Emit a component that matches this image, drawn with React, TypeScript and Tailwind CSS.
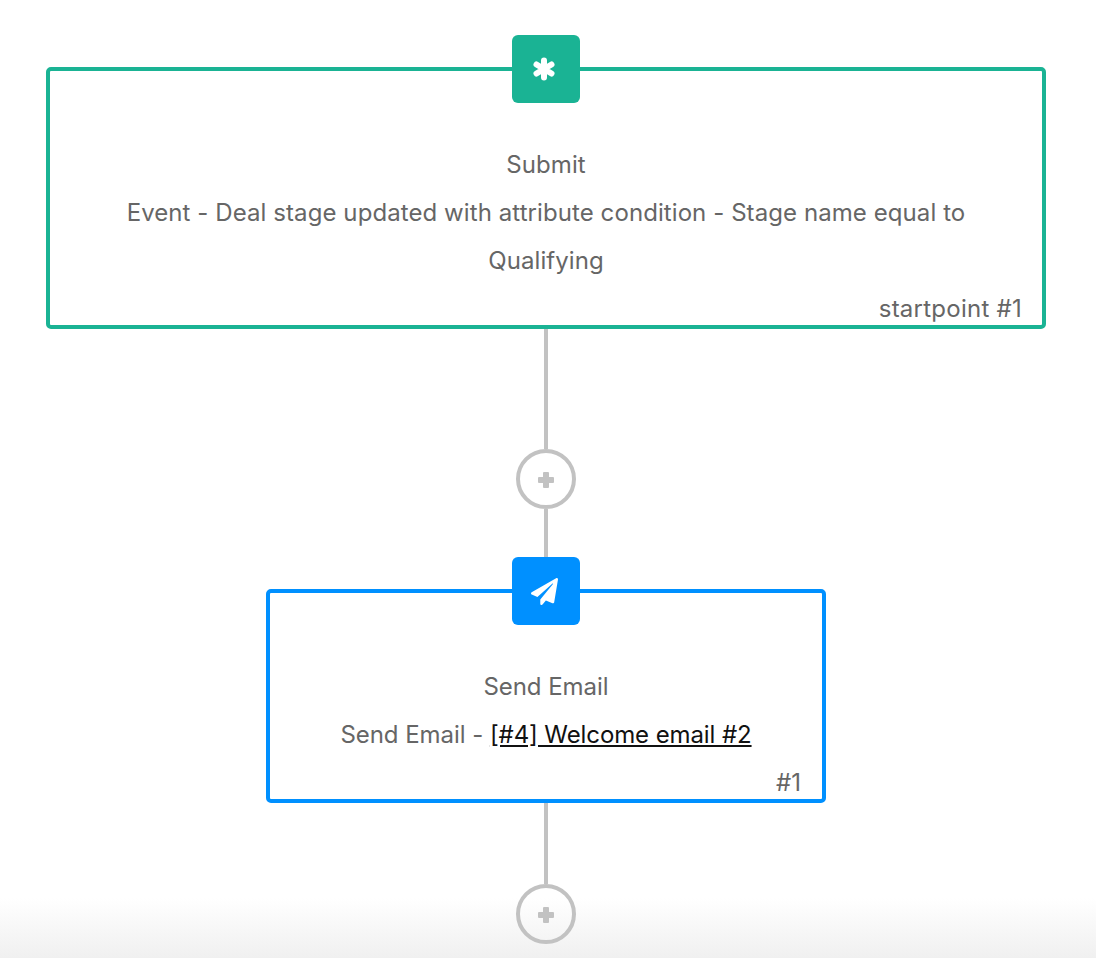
import { FaPaperPlane } from "react-icons/fa";
import type { ReactNode } from "react";

const Connector = ({ height }: { height: string }) => <div className={`w-1 bg-[#c2c2c2] ${height}`} />;

const AddButton = () => (
  <button className="relative flex h-[60px] w-[60px] shrink-0 items-center justify-center rounded-full border-4 border-[#c2c2c2]">
    <svg width="16" height="16" viewBox="0 0 16 16" fill="#c2c2c2" className="translate-y-px">
      <rect x="5" y="0" width="6" height="16" rx="1" />
      <rect x="0" y="5" width="16" height="6" rx="1" />
    </svg>
  </button>
);

const AsteriskIcon = () => (
  <svg width="22" height="24" viewBox="0 0 22 24" fill="none" stroke="white" strokeWidth="6" strokeLinecap="round" className="-translate-x-0.5">
    <path d="M11 3.5v17M3.5 7.5l15 9M18.5 7.5l-15 9" />
  </svg>
);

const Node = ({
  width,
  border,
  iconBg,
  icon,
  tag,
  children,
}: {
  width: string;
  border: string;
  iconBg: string;
  icon: ReactNode;
  tag: ReactNode;
  children: ReactNode;
}) => (
  <div className={`relative mt-8 rounded-[5px] border-4 bg-white pt-[70px] pb-[4px] text-center text-[#666666] ${width} ${border}`}>
    <div className={`absolute -top-9 left-1/2 flex h-[68px] w-[68px] -translate-x-1/2 items-center justify-center rounded-[6px] text-white ${iconBg}`}>
      {icon}
    </div>
    <div className="px-5 leading-[48px]">{children}</div>
    <div className="mt-3 pr-[20px] text-right leading-6">{tag}</div>
  </div>
);

export default function App() {
  return (
    <div className="relative flex h-[958px] flex-col items-center overflow-hidden bg-white pt-[35px] pr-1 font-['Inter',sans-serif] text-[24px]">
      <div className="pointer-events-none absolute inset-x-0 bottom-0 h-[60px] bg-gradient-to-b from-transparent to-[#f0f0f0]" />
      <Node
        width="w-[1000px]"
        border="border-[#1ab394]"
        iconBg="bg-[#1ab394]"
        icon={<AsteriskIcon />}
        tag={<span className="tracking-[0.25px]">startpoint #1</span>}
      >
        <div className="tracking-[0.08px]">Submit</div>
        <div className="tracking-[0.08px]">Event - Deal stage updated with attribute condition - Stage name equal to Qualifying</div>
      </Node>
      <Connector height="h-[120px]" />
      <AddButton />
      <Connector height="h-[48px]" />
      <Node
        width="w-[560px]"
        border="border-[#0090ff]"
        iconBg="bg-[#0090ff]"
        icon={<FaPaperPlane size={27} className="-translate-x-0.5" />}
        tag={<span className="mr-[1px]">#1</span>}
      >
        <div className="tracking-[-0.05px]">Send Email</div>
        <div className="tracking-[-0.05px]">
          Send Email - <a className="tracking-[-0.1px] text-[#111111] underline">[#4] Welcome email #2</a>
        </div>
      </Node>
      <Connector height="h-[81px]" />
      <AddButton />
    </div>
  );
}
